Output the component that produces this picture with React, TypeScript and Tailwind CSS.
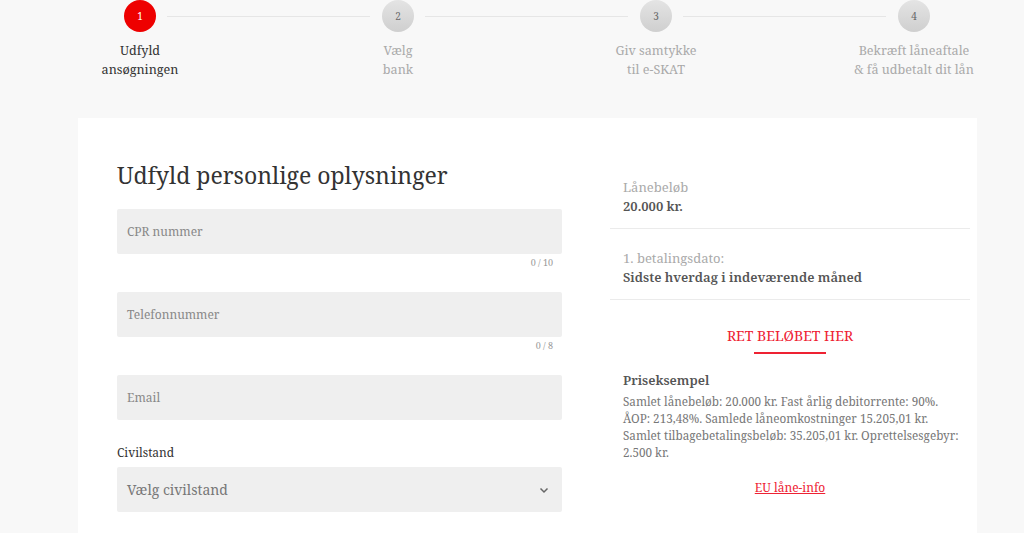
import React from "react";

const steps = [
  { n: "1", l1: "Udfyld", l2: "ansøgningen", active: true },
  { n: "2", l1: "Vælg", l2: "bank", active: false },
  { n: "3", l1: "Giv samtykke", l2: "til e-SKAT", active: false },
  { n: "4", l1: "Bekræft låneaftale", l2: "& få udbetalt dit lån", active: false },
];

const serif = { fontFamily: '"Noto Serif", "DejaVu Serif", serif' };

export default function App() {
  return (
    <div className="w-[1024px] h-[533px] overflow-hidden bg-[#f8f8f8] text-[#333]" style={serif}>
      <div className="flex ml-[11px] w-[1032px]">
        {steps.map((s, i) => (
          <div key={s.n} className="w-[258px] flex flex-col items-center relative">
            {i < steps.length - 1 && (
              <div className="absolute top-[16px] left-[156px] w-[203px] h-px bg-[#e6e6e6]" />
            )}
            <div
              className={
                s.active
                  ? "w-[32px] h-[32px] rounded-full bg-[#ee0000] text-white text-[10px] flex items-center justify-center"
                  : "w-[32px] h-[32px] rounded-full bg-gradient-to-b from-[#e4e4e4] to-[#cfcfcf] text-[#666] text-[10px] flex items-center justify-center"
              }
            >
              {s.n}
            </div>
            <div
              className={
                "mt-[9px] text-[12.6px] leading-[19px] text-center " +
                (s.active ? "text-[#333]" : "text-[#aaa]")
              }
            >
              <div>{s.l1}</div>
              <div>{s.l2}</div>
            </div>
          </div>
        ))}
      </div>

      <div className="ml-[78px] mt-[39px] w-[899px] h-[500px] bg-white flex">
        <div className="w-[484px] pl-[39px] pt-[42px]">
          <h1 className="text-[23px] leading-[30px] text-[#333]">Udfyld personlige oplysninger</h1>
          <div className="mt-[19px] w-[445px]">
            <div className="h-[45px] bg-[#efefef] rounded-[2px] flex items-center px-[10px] text-[12px] text-[#888]">CPR nummer</div>
            <div className="h-[18px] text-right pr-[9px] text-[9px] leading-[18px] text-[#999]">0 / 10</div>
            <div className="mt-[20px] h-[45px] bg-[#efefef] rounded-[2px] flex items-center px-[10px] text-[12px] text-[#888]">Telefonnummer</div>
            <div className="h-[18px] text-right pr-[9px] text-[9px] leading-[18px] text-[#999]">0 / 8</div>
            <div className="mt-[20px] h-[45px] bg-[#efefef] rounded-[2px] flex items-center px-[10px] text-[12px] text-[#888]">Email</div>
            <div className="mt-[24px] text-[12px] leading-[18px] text-[#333]">Civilstand</div>
            <div className="mt-[5px] h-[45px] bg-[#efefef] rounded-[2px] flex items-center justify-between px-[10px] text-[14px] text-[#777]">
              <span>Vælg civilstand</span>
              <svg width="12" height="12" viewBox="0 0 12 12" className="mr-[2px]">
                <path d="M2.5 4.5 L6 8 L9.5 4.5" fill="none" stroke="#666" strokeWidth="1.5" />
              </svg>
            </div>
          </div>
        </div>

        <div className="w-[360px] ml-[48px] pt-[60px]">
          <div className="px-[13px] pb-[12px] border-b border-[#ebebeb]">
            <div className="text-[13px] leading-[19px] text-[#aaa]">Lånebeløb</div>
            <div className="text-[13px] leading-[19px] text-[#555] font-semibold">20.000 kr.</div>
          </div>
          <div className="px-[13px] pt-[20px] pb-[12px] border-b border-[#ebebeb]">
            <div className="text-[13px] leading-[19px] text-[#aaa]">1. betalingsdato:</div>
            <div className="text-[13px] leading-[19px] text-[#555] font-semibold">Sidste hverdag i indeværende måned</div>
          </div>
          <div className="flex flex-col items-center pt-[26px]">
            <div className="text-[14px] leading-[19px] text-[#ee2233]">RET BELØBET HER</div>
            <div className="mt-[7px] w-[72px] h-[2px] bg-[#ee2233]" />
          </div>
          <div className="pl-[13px] mt-[17px]">
            <div className="text-[13px] leading-[19px] text-[#555] font-semibold">Priseksempel</div>
            <p className="mt-[3px] text-[11.7px] leading-[17px] text-[#777] whitespace-nowrap">
              Samlet lånebeløb: 20.000 kr. Fast årlig debitorrente: 90%.
              <br />
              ÅOP: 213,48%. Samlede låneomkostninger 15.205,01 kr.
              <br />
              Samlet tilbagebetalingsbeløb: 35.205,01 kr. Oprettelsesgebyr:
              <br />
              2.500 kr.
            </p>
          </div>
          <div className="mt-[13px] text-center">
            <a className="text-[12px] text-[#ee2233] underline">EU låne-info</a>
          </div>
        </div>
      </div>
    </div>
  );
}
